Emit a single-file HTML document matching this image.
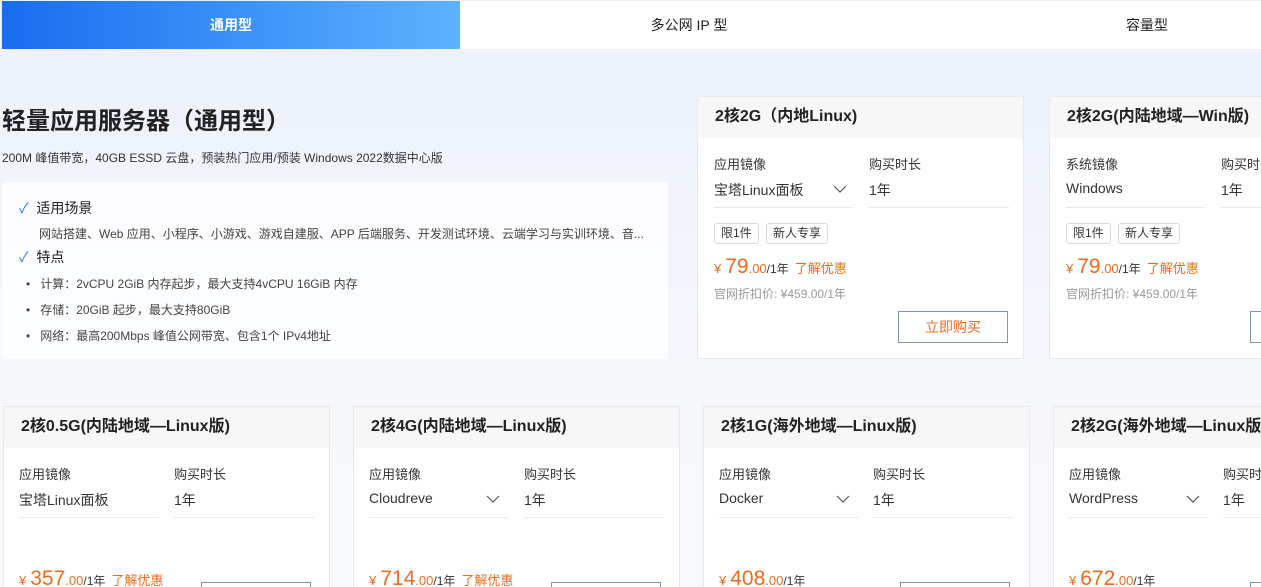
<!DOCTYPE html>
<html style="overflow:hidden"><head><meta charset="utf-8"><style>
*{margin:0;padding:0;box-sizing:border-box}
html,body{width:1261px;height:587px;overflow:hidden}
body{position:relative;font-family:"Liberation Sans","Noto Sans CJK SC",sans-serif;color:#333;background:linear-gradient(180deg,#eaf0fb 0,#f1f4fb 200px,#f5f7fb 380px,#f7f8fb 587px)}
.a{position:absolute;white-space:nowrap}
.tab{position:absolute;top:1px;height:48px;line-height:48px;text-align:center;font-size:14px;color:#222;background:#fff}
.card{position:absolute;width:327px;background:#fff;border:1px solid #e6e8ee;overflow:hidden}
.hd{height:41px;background:#f7f7f8;font-weight:bold;font-size:16px;color:#222;line-height:40px;padding-left:17px;white-space:nowrap}
.lb{position:absolute;font-size:13px;color:#333;top:57px}
.val{position:absolute;font-size:14px;color:#333;top:83px}
.ul{position:absolute;top:110px;height:1px;background:#e8e8e8;width:140px}
.chev{position:absolute;top:87px}
.tag{position:absolute;top:126px;height:21px;line-height:19px;border:1px solid #d8d8d8;border-radius:3px;font-size:12px;padding:0 6px;color:#333}
.pr{position:absolute;color:#f06a1d;font-size:13px;white-space:nowrap}
.pr b{font-weight:normal;font-size:21px;margin-left:4px}
.pr i{font-style:normal;color:#333;font-size:12px}
.pr s{text-decoration:none;margin-left:6px}
.old{position:absolute;font-size:12px;color:#999}
.btn{position:absolute;width:110px;height:32px;border:1px solid #8593a8;color:#f06a1d;font-size:14px;text-align:center;line-height:30px;background:#fff}
</style></head><body>
<div class="tab" style="left:2px;width:458px;background:linear-gradient(90deg,#1a6cf0,#5db2fe);color:#fff;font-weight:bold">通用型</div>
<div class="tab" style="left:460px;width:458px">多公网 IP 型</div>
<div class="tab" style="left:918px;width:343px"><span style="position:absolute;left:208px;top:0">容量型</span></div>

<div class="a" style="left:2px;top:101px;font-size:24px;font-weight:bold;color:#222">轻量应用服务器（通用型）</div>
<div class="a" style="left:2px;top:149px;font-size:12px;color:#333">200M 峰值带宽，40GB ESSD 云盘，预装热门应用/预装 Windows 2022数据中心版</div>
<div class="a" style="left:2px;top:182px;width:666px;height:177px;background:rgba(255,255,255,.75)"></div>
<div class="a" style="left:19px;top:198px;font-size:14px;color:#222"><span style="color:#3a7ae8">✓</span>&nbsp; 适用场景</div>
<div class="a" style="left:39px;top:225px;font-size:12px;color:#444">网站搭建、Web 应用、小程序、小游戏、游戏自建服、APP 后端服务、开发测试环境、云端学习与实训环境、音...</div>
<div class="a" style="left:19px;top:247px;font-size:14px;color:#222"><span style="color:#3a7ae8">✓</span>&nbsp; 特点</div>
<div class="a" style="left:26px;top:275px;font-size:12px;color:#444">•&nbsp;&nbsp; 计算：2vCPU 2GiB 内存起步，最大支持4vCPU 16GiB 内存</div>
<div class="a" style="left:26px;top:301px;font-size:12px;color:#444">•&nbsp;&nbsp; 存储：20GiB 起步，最大支持80GiB</div>
<div class="a" style="left:26px;top:327px;font-size:12px;color:#444">•&nbsp;&nbsp; 网络：最高200Mbps 峰值公网带宽、包含1个 IPv4地址</div>

<div class="card" style="left:697px;top:96px;height:263px">
<div class="hd">2核2G（内地Linux)</div>
<div class="lb" style="left:16px">应用镜像</div><div class="lb" style="left:171px">购买时长</div>
<div class="val" style="left:16px">宝塔Linux面板</div><div class="val" style="left:171px">1年</div>
<svg class="chev" style="left:135px" width="14" height="10"><path d="M1 2l6 6 6-6" fill="none" stroke="#555" stroke-width="1.2"/></svg>
<div class="ul" style="left:16px;width:139px"></div><div class="ul" style="left:171px"></div>
<div class="tag" style="left:16px">限1件</div><div class="tag" style="left:68px">新人专享</div>
<div class="pr" style="left:16px;top:158px">¥<b>79</b>.00<i>/1年</i><s>了解优惠</s></div>
<div class="old" style="left:16px;top:188px">官网折扣价: ¥459.00/1年</div>
<div class="btn" style="left:200px;top:214px">立即购买</div>
</div>
<div class="card" style="left:1049px;top:96px;height:263px">
<div class="hd">2核2G(内陆地域—Win版)</div>
<div class="lb" style="left:16px">系统镜像</div><div class="lb" style="left:171px">购买时长</div>
<div class="val" style="left:16px">Windows</div><div class="val" style="left:171px">1年</div>
<div class="ul" style="left:16px;width:139px"></div><div class="ul" style="left:171px"></div>
<div class="tag" style="left:16px">限1件</div><div class="tag" style="left:68px">新人专享</div>
<div class="pr" style="left:16px;top:158px">¥<b>79</b>.00<i>/1年</i><s>了解优惠</s></div>
<div class="old" style="left:16px;top:188px">官网折扣价: ¥459.00/1年</div>
<div class="btn" style="left:200px;top:214px">立即购买</div>
</div>

<div class="card" style="left:3px;top:406px;height:181px;border-bottom:none">
<div class="hd">2核0.5G(内陆地域—Linux版)</div>
<div class="lb" style="left:15px">应用镜像</div><div class="lb" style="left:170px">购买时长</div>
<div class="val" style="left:15px">宝塔Linux面板</div><div class="val" style="left:170px">1年</div>
<div class="ul" style="left:15px"></div><div class="ul" style="left:170px"></div>
<div class="pr" style="left:15px;top:160px">¥<b>357</b>.00<i>/1年</i><s>了解优惠</s></div>
<div class="btn" style="left:197px;top:175px"></div>
</div>
<div class="card" style="left:353px;top:406px;height:181px;border-bottom:none">
<div class="hd">2核4G(内陆地域—Linux版)</div>
<div class="lb" style="left:15px">应用镜像</div><div class="lb" style="left:170px">购买时长</div>
<div class="val" style="left:15px">Cloudreve</div><div class="val" style="left:170px">1年</div>
<svg class="chev" style="left:132px" width="14" height="10"><path d="M1 2l6 6 6-6" fill="none" stroke="#555" stroke-width="1.2"/></svg>
<div class="ul" style="left:15px;width:139px"></div><div class="ul" style="left:170px"></div>
<div class="pr" style="left:15px;top:160px">¥<b>714</b>.00<i>/1年</i><s>了解优惠</s></div>
<div class="btn" style="left:197px;top:175px"></div>
</div>
<div class="card" style="left:703px;top:406px;height:181px;border-bottom:none">
<div class="hd">2核1G(海外地域—Linux版)</div>
<div class="lb" style="left:15px">应用镜像</div><div class="lb" style="left:169px">购买时长</div>
<div class="val" style="left:15px">Docker</div><div class="val" style="left:169px">1年</div>
<svg class="chev" style="left:132px" width="14" height="10"><path d="M1 2l6 6 6-6" fill="none" stroke="#555" stroke-width="1.2"/></svg>
<div class="ul" style="left:15px;width:139px"></div><div class="ul" style="left:169px"></div>
<div class="pr" style="left:15px;top:160px">¥<b>408</b>.00<i>/1年</i></div>
<div class="btn" style="left:196px;top:175px"></div>
</div>
<div class="card" style="left:1053px;top:406px;height:181px;border-bottom:none">
<div class="hd">2核2G(海外地域—Linux版)</div>
<div class="lb" style="left:15px">应用镜像</div><div class="lb" style="left:169px">购买时长</div>
<div class="val" style="left:15px">WordPress</div><div class="val" style="left:169px">1年</div>
<svg class="chev" style="left:132px" width="14" height="10"><path d="M1 2l6 6 6-6" fill="none" stroke="#555" stroke-width="1.2"/></svg>
<div class="ul" style="left:15px;width:139px"></div><div class="ul" style="left:169px"></div>
<div class="pr" style="left:15px;top:160px">¥<b>672</b>.00<i>/1年</i></div>
<div class="btn" style="left:196px;top:175px"></div>
</div>
</body></html>
